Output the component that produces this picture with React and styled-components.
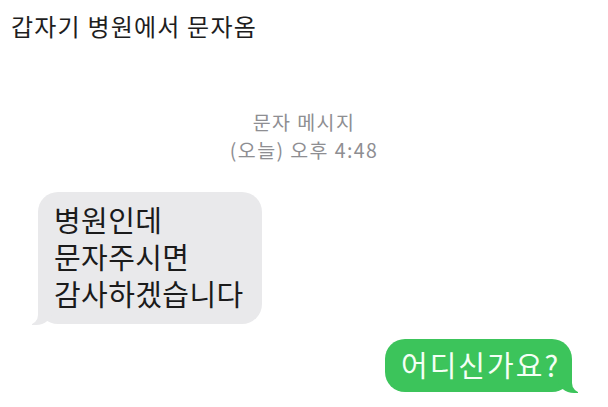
import React from 'react'
import styled, { createGlobalStyle } from 'styled-components'

const GlobalStyle = createGlobalStyle`
  html, body {
    margin: 0;
    padding: 0;
    background: #ffffff;
  }
  body {
    font-family: "Noto Sans CJK KR", "Noto Sans", sans-serif;
  }
`

const Page = styled.div`
  width: 608px;
  height: 407px;
  overflow: hidden;
  display: flex;
  flex-direction: column;
`

const Title = styled.h1`
  margin: 0;
  padding: 11px 0 0 11px;
  font-size: 24px;
  font-weight: 400;
  letter-spacing: 1.2px;
  line-height: 30px;
  color: #1e1e1e;
`

const Stamp = styled.div`
  margin-top: 67px;
  text-align: center;
  font-size: 19.5px;
  letter-spacing: 1.4px;
  line-height: 28px;
  color: #8e8e92;
`

const Row = styled.div`
  display: flex;
  justify-content: ${p => (p.$mine ? 'flex-end' : 'flex-start')};
  padding: ${p => (p.$mine ? '0 36px 0 0' : '0 0 0 38px')};
  margin-top: ${p => p.$gap}px;
`

const Bubble = styled.div`
  position: relative;
  box-sizing: border-box;
  width: ${p => p.$w}px;
  padding: ${p => p.$pad};
  border-radius: 20px;
  background: ${p => (p.$mine ? '#3cc45b' : '#e9e9eb')};
  color: ${p => (p.$mine ? '#f4fff5' : '#1b1b1b')};
  font-size: 29px;
  letter-spacing: ${p => p.$ls}px;
  line-height: 37px;
  white-space: nowrap;

  &::before {
    content: "";
    position: absolute;
    bottom: -1px;
    ${p => (p.$mine ? 'right: -6px;' : 'left: -6px;')}
    width: 20px;
    height: 22px;
    background: ${p => (p.$mine ? '#3cc45b' : '#e9e9eb')};
    ${p => (p.$mine ? 'border-bottom-left-radius: 16px 14px;' : 'border-bottom-right-radius: 16px 14px;')}
  }

  &::after {
    content: "";
    position: absolute;
    bottom: -1px;
    ${p => (p.$mine ? 'right: -10px;' : 'left: -10px;')}
    width: 10px;
    height: 23px;
    background: #ffffff;
    ${p => (p.$mine ? 'border-bottom-left-radius: 10px;' : 'border-bottom-right-radius: 10px;')}
  }
`

export default function App() {
  return (
    <Page>
      <GlobalStyle />
      <Title>갑자기 병원에서 문자옴</Title>
      <Stamp>
        문자 메시지
        <br />
        (오늘) 오후 4:48
      </Stamp>
      <Row $gap={28}>
        <Bubble $w={224} $ls={0.4} $pad="9px 0 12px 16px">
          병원인데
          <br />
          문자주시면
          <br />
          감사하겠습니다
        </Bubble>
      </Row>
      <Row $mine $gap={15}>
        <Bubble $mine $w={187} $ls={2} $pad="7px 0 9px 16px">
          어디신가요?
        </Bubble>
      </Row>
    </Page>
  )
}
